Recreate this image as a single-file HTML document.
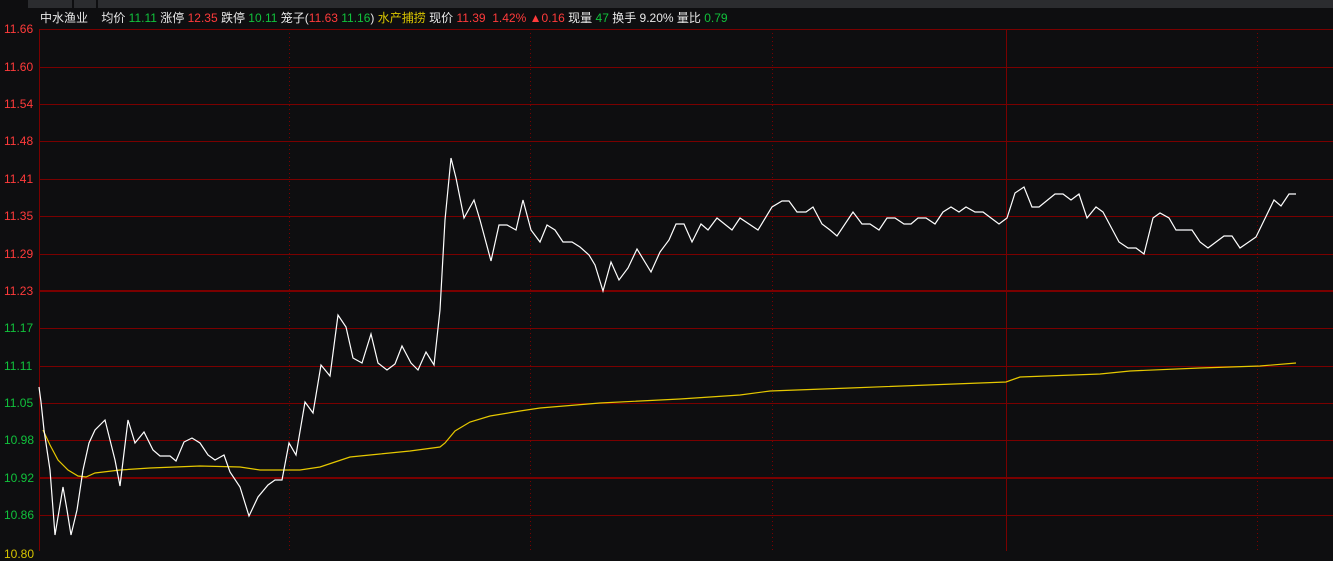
<!DOCTYPE html><html><head><meta charset="utf-8"><style>
body{margin:0;width:1333px;height:551px;background:#0e0e10;overflow:hidden;font-family:"Liberation Sans","Noto Sans CJK SC",sans-serif;position:relative}
.top{position:absolute;left:0;top:0;width:1333px;height:8px;background:#2b2c2f}
.hd{position:absolute;left:40px;top:10px;font-size:12px;color:#e8e8e8;white-space:pre;line-height:16px}
.r{color:#ff3b3b}.g{color:#11c23c}.y{color:#d8c400}
.lb{position:absolute;left:4px;font-size:12px;line-height:12px}
</style></head><body>
<div class="top"><div style="position:absolute;left:0;top:0;width:28px;height:8px;background:#0e0e10"></div><div style="position:absolute;left:72px;top:0;width:2px;height:8px;background:#0e0e10"></div><div style="position:absolute;left:96px;top:0;width:2px;height:8px;background:#0e0e10"></div></div>
<div class="hd">中水渔业    均价 <span class="g">11.11</span> 涨停 <span class="r">12.35</span> 跌停 <span class="g">10.11</span> 笼子(<span class="r">11.63</span> <span class="g">11.16</span>) <span class="y">水产捕捞</span> 现价 <span class="r">11.39  1.42% ▲0.16</span> 现量 <span class="g">47</span> 换手 9.20% 量比 <span class="g">0.79</span></div>
<div class="lb r" style="top:23px">11.66</div><div class="lb r" style="top:61px">11.60</div><div class="lb r" style="top:98px">11.54</div><div class="lb r" style="top:135px">11.48</div><div class="lb r" style="top:173px">11.41</div><div class="lb r" style="top:210px">11.35</div><div class="lb r" style="top:248px">11.29</div><div class="lb r" style="top:285px">11.23</div><div class="lb g" style="top:322px">11.17</div><div class="lb g" style="top:360px">11.11</div><div class="lb g" style="top:397px">11.05</div><div class="lb g" style="top:434px">10.98</div><div class="lb g" style="top:472px">10.92</div><div class="lb g" style="top:509px">10.86</div><div class="lb y" style="top:548px">10.80</div>
<svg width="1333" height="551" style="position:absolute;left:0;top:0">
<g stroke="#7a0000" stroke-width="1" shape-rendering="crispEdges">
<line x1="39" y1="29.5" x2="1333" y2="29.5"/><line x1="39" y1="67.5" x2="1333" y2="67.5"/><line x1="39" y1="104.5" x2="1333" y2="104.5"/><line x1="39" y1="141.5" x2="1333" y2="141.5"/><line x1="39" y1="179.5" x2="1333" y2="179.5"/><line x1="39" y1="216.5" x2="1333" y2="216.5"/><line x1="39" y1="254.5" x2="1333" y2="254.5"/><line x1="39" y1="291" x2="1333" y2="291" stroke-width="2"/><line x1="39" y1="328.5" x2="1333" y2="328.5"/><line x1="39" y1="366.5" x2="1333" y2="366.5"/><line x1="39" y1="403.5" x2="1333" y2="403.5"/><line x1="39" y1="440.5" x2="1333" y2="440.5"/><line x1="39" y1="478" x2="1333" y2="478" stroke-width="2"/><line x1="39" y1="515.5" x2="1333" y2="515.5"/>
<line x1="39.5" y1="29" x2="39.5" y2="551"/><line x1="1006.5" y1="29" x2="1006.5" y2="551"/>
<g stroke-dasharray="1,3"><line x1="289.5" y1="29" x2="289.5" y2="551"/><line x1="530.5" y1="29" x2="530.5" y2="551"/><line x1="772.5" y1="29" x2="772.5" y2="551"/><line x1="1257.5" y1="29" x2="1257.5" y2="551"/></g>
</g>
<polyline fill="none" stroke="#e6c800" stroke-width="1.2" points="43,430 50,445 58,460 68,470 78,476 86,477 95,473 120,470 150,468 200,466 240,467 260,470 300,470 320,467 335,462 350,457 380,454 410,451 440,447 445,443 455,431 470,422 490,416 520,411 540,408 600,403 680,399 740,395 770,391 850,388 1006,382 1020,377 1100,374 1130,371 1200,368 1260,366 1296,363"/>
<polyline fill="none" stroke="#fff" stroke-width="1.2" points="39,387 41,402 44,430 50,470 55,535 60,505 63,487 67,510 71,535 77,510 83,470 89,443 95,430 105,420 115,460 120,486 128,420 135,443 144,432 153,450 160,456 170,456 176,461 184,442 192,438 200,443 208,455 215,460 224,455 230,472 240,487 249,516 258,497 268,485 275,480 282,480 289,443 296,455 305,402 313,413 321,365 330,376 338,315 346,327 353,358 362,363 371,334 378,363 387,370 395,364 402,346 411,363 418,370 426,352 434,365 440,310 445,220 451,158 456,178 464,218 474,200 480,220 491,261 499,225 507,225 516,230 523,200 531,230 540,242 547,225 555,230 563,242 572,242 580,247 589,255 595,265 603,291 611,262 619,280 628,268 637,249 651,272 660,252 669,240 676,224 684,224 692,242 701,224 708,230 717,218 732,230 740,218 758,230 772,207 782,201 789,201 797,212 806,212 813,207 822,224 830,230 837,236 853,212 862,224 870,224 879,230 887,218 895,218 904,224 911,224 918,218 926,218 935,224 943,212 951,207 959,212 966,207 975,212 983,212 999,224 1007,218 1015,193 1024,187 1032,207 1039,207 1055,194 1063,194 1071,200 1079,194 1087,218 1096,207 1103,212 1111,227 1119,242 1128,248 1136,248 1144,254 1153,218 1160,213 1169,218 1176,230 1192,230 1200,242 1208,248 1224,236 1232,236 1240,248 1256,237 1274,200 1281,206 1289,194 1296,194"/>
</svg>
</body></html>
